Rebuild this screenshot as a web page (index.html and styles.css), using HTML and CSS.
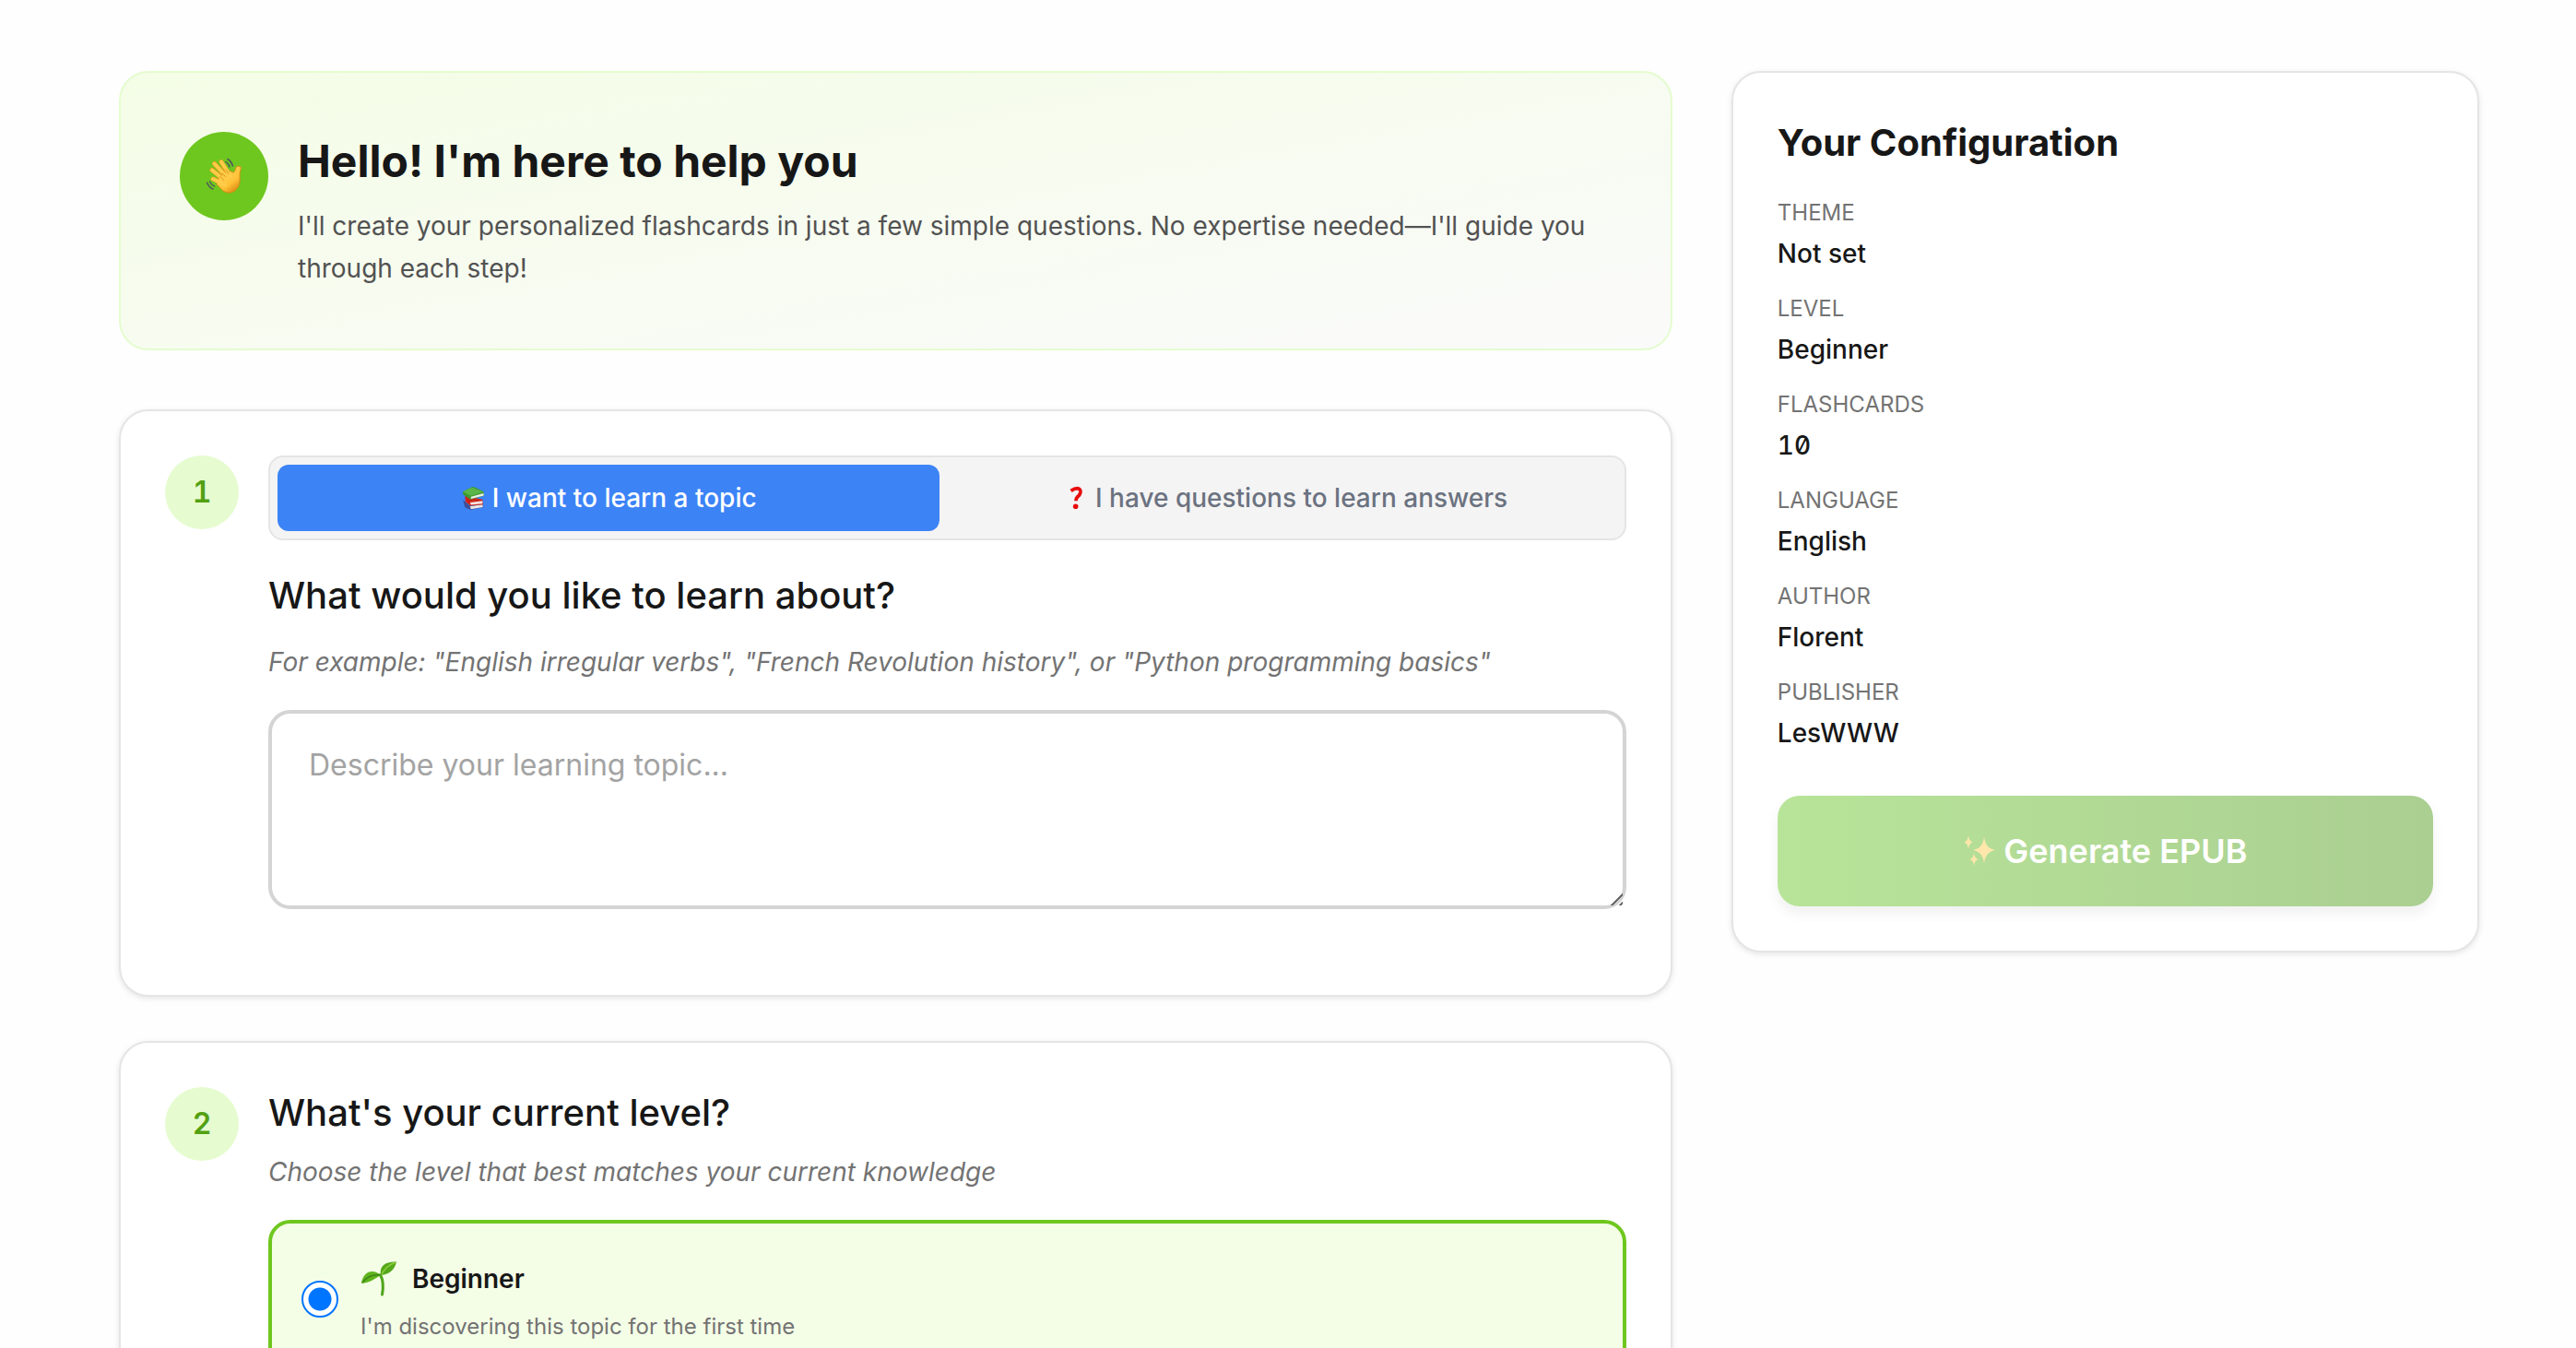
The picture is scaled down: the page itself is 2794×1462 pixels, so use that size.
FILE: index.html
```html
<!DOCTYPE html>
<html lang="en">
  <head>
    <meta charset="UTF-8" />
    <meta name="viewport" content="width=device-width, initial-scale=1.0" />
    <title>Flashcards Generator</title>
    <link rel="stylesheet" href="styles.css">
  </head>

  <body>
    <div class="layout">
      <main class="main">
        <!-- Welcome banner -->
        <section class="hero">
          <div class="hero-icon">
            <svg class="icon-wave" viewBox="0 0 40 40" aria-hidden="true">
              <defs>
                <linearGradient id="skin" x1="0" y1="0" x2="0.7" y2="1">
                  <stop offset="0" stop-color="#ffd45e" />
                  <stop offset="0.7" stop-color="#ffc238" />
                  <stop offset="1" stop-color="#dc8a14" />
                </linearGradient>
              </defs>
              <g stroke="#e39b1c" stroke-width="5" stroke-linecap="round">
                <path d="M22 20 L9.500 6.500" />
                <path d="M25 18 L17 4.500" />
                <path d="M19 23 L7 13.500" />
                <path d="M19 28 L8 23" />
              </g>
              <path d="M14 22 L25 14 L30 16 C31 16 32 14 32.500 12 C33 9.500 35 9 37 9.500 C39 10 38.500 12 37.500 14.500 C36.500 18 37.500 22 37 26 C36.500 33 31 38 25 38 C20 38 17 34 12 29 Z" fill="url(#skin)" stroke="#d98c14" stroke-width="1" />
              <g stroke="#ffcb48" stroke-width="4" stroke-linecap="round">
                <path d="M24 22 L9.500 6.500" />
                <path d="M27 20 L17 4.500" />
                <path d="M21 25 L7 13.500" />
                <path d="M21 30 L8 23" />
              </g>
              <path d="M18 17 L22 21 M15.500 20.500 L20 24.500 M22 13 L25 17.500" stroke="#e09a1e" stroke-width="1" stroke-linecap="round" />
              <g fill="none" stroke="#505a60" stroke-width="1.500" stroke-linecap="round">
                <path d="M24 1.500 Q28 4 29.500 9" />
                <path d="M22 4.500 Q25 6.500 26 10" />
                <path d="M1.500 27 Q3.500 32 8 34" />
                <path d="M4.500 26 Q6 29.500 9.500 31" />
              </g>
            </svg>
          </div>
          <div class="hero-text">
            <h1>Hello! I'm here to help you</h1>
            <p>I'll create your personalized flashcards in just a few simple questions. No expertise needed—I'll guide you through each step!</p>
          </div>
        </section>

        <!-- Step 1: topic -->
        <section class="card step">
          <div class="step-number">1</div>
          <div class="step-body">
            <div class="toggle">
              <button type="button" class="toggle-btn active">
                <svg class="icon-books" viewBox="0 0 24 24" aria-hidden="true">
                  <path d="M2 14 L4 21.500 L10 24 L22.500 21.500 L22 18 L9 20 Z" fill="#3d4f96" />
                  <path d="M9 20.500 L21.500 18.500 L22 21.300 L10 23.300 Z" fill="#e9e6e6" />
                  <path d="M4 10 L4.500 16 L9.500 19.800 L22 18.800 L21.500 13.500 Z" fill="#cf2418" />
                  <path d="M9 16.600 L21.500 15 L21.500 17.800 L10 19 Z" fill="#f3e3e0" />
                  <path d="M1.500 6 L10 1.500 Q12 0.500 14 1.300 L22.500 5.500 L23 10 L9.500 13.500 L2.500 9 Z" fill="#3c9a34" />
                  <path d="M2 5.800 L11 1.500 L22.500 6 L10 10 Z" fill="#5cb548" />
                  <path d="M10 10.800 L22.500 7.300 L22.800 9.600 L10 13 Z" fill="#eeefe8" />
                </svg>
                I want to learn a topic
              </button>
              <button type="button" class="toggle-btn">
                <svg class="icon-question" viewBox="0 0 24 24" aria-hidden="true">
                  <path d="M7 5 Q10.500 2.500 13.500 2.500 Q17 3 16.500 6.500 Q16 9 13.500 11 Q12 12.500 12 15" fill="none" stroke="#e80c0c" stroke-width="3.500" />
                  <circle cx="11.700" cy="20.500" r="2.600" fill="#e80c0c" />
                </svg>
                I have questions to learn answers
              </button>
            </div>
            <h2 class="topic-title"><label for="topic">What would you like to learn about?</label></h2>
            <p class="hint">For example: "English irregular verbs", "French Revolution history", or "Python programming basics"</p>
            <textarea id="topic" name="topic" rows="3" placeholder="Describe your learning topic..."></textarea>
          </div>
        </section>

        <!-- Step 2: level -->
        <section class="card step">
          <div class="step-number">2</div>
          <div class="step-body">
            <h2>What's your current level?</h2>
            <p class="hint">Choose the level that best matches your current knowledge</p>
            <label class="option" for="beginner">
              <input type="radio" name="level" id="beginner" value="beginner" checked />
              <span class="option-text">
                <span class="option-title">
                  <svg class="icon-seedling" viewBox="0 0 40 40" aria-hidden="true">
                    <path d="M21.500 15.500 Q26 24 23.500 37" fill="none" stroke="#4fa51c" stroke-width="3" stroke-linecap="round" />
                    <path d="M22 16 C20 6 27 1 39 1.500 C37 10 32 15 22 16 Z" fill="#56a81b" />
                    <path d="M23 15 C26 9 30 5 38 2" fill="none" stroke="#8ccc3c" stroke-width="1.500" />
                    <path d="M22 16 C14 9 3 11 1 25 C11 24 15 20 22 16 Z" fill="#5fb41f" />
                    <path d="M2 24 C7 18 13 15 21 16" fill="none" stroke="#3c8613" stroke-width="1.500" />
                  </svg>
                  Beginner
                </span>
                <span class="option-desc">I'm discovering this topic for the first time</span>
              </span>
            </label>
          </div>
        </section>
      </main>

      <!-- Summary of the choices -->
      <aside class="card config">
        <h2>Your Configuration</h2>
        <dl>
          <dt>Theme</dt>
          <dd>Not set</dd>
          <dt>Level</dt>
          <dd>Beginner</dd>
          <dt>Flashcards</dt>
          <dd class="number">10</dd>
          <dt>Language</dt>
          <dd>English</dd>
          <dt>Author</dt>
          <dd>Florent</dd>
          <dt>Publisher</dt>
          <dd>LesWWW</dd>
        </dl>
        <button type="button" class="generate" disabled>
          <svg class="icon-sparkles" viewBox="0 0 36 36" aria-hidden="true">
            <path d="M23 2 Q24 15 35 17 Q24 19 23 32 Q22 19 11 17 Q22 15 23 2 Z" fill="#ffd05a" />
            <path d="M6 1 Q6.500 7.500 11 8.500 Q6.500 9.500 6 16 Q5.500 9.500 1 8.500 Q5.500 7.500 6 1 Z" fill="#ffd05a" />
            <path d="M12 20 Q12.500 26 17 27 Q12.500 28 12 34 Q11.500 28 7 27 Q11.500 26 12 20 Z" fill="#ffd05a" />
          </svg>
          Generate EPUB
        </button>
      </aside>
    </div>
  </body>
</html>
```

FILE: styles.css
```css
* {
  margin: 0;
  padding: 0;
  box-sizing: border-box;
}

body {
  background-color: #fefefe;
  color: #171717;
  font-family: Inter, "Liberation Sans", sans-serif;
  font-size: 28px;
  line-height: 46px;
}

button,
textarea {
  font-family: inherit;
}

.layout {
  display: grid;
  grid-template-columns: 27fr 13fr;
  align-items: start;
  gap: 64px;
  padding: 77px 105px 48px 129px;
}

.main {
  display: flex;
  flex-direction: column;
  gap: 48px;
}

.hero {
  display: flex;
  gap: 32px;
  margin-bottom: 16px;
  padding: 64px;
  border: 2px solid #e5fccf;
  border-radius: 32px;
  background: linear-gradient(to bottom right, #f4fde6 0%, #fafafa 100%);
}

.hero-icon {
  display: flex;
  flex-shrink: 0;
  align-items: center;
  justify-content: center;
  width: 96px;
  height: 96px;
  border-radius: 50%;
  background-color: #6ec71e;
}

.icon-wave {
  width: 40px;
  height: 40px;
}

h1 {
  margin-bottom: 15px;
  font-size: 48px;
  font-weight: 700;
  line-height: 64px;
}

.hero p {
  color: #525252;
}

.card {
  padding: 48px;
  border: 2px solid #e5e5e5;
  border-radius: 32px;
  background-color: #fff;
  box-shadow: 0 2px 6px rgba(0, 0, 0, 0.1);
}

h2 {
  margin-bottom: 13px;
  font-size: 40px;
  font-weight: 500;
  line-height: 56px;
}

.step {
  display: flex;
  gap: 32px;
}

.step-number {
  flex-shrink: 0;
  width: 80px;
  height: 80px;
  border-radius: 50%;
  background-color: #e6fcd0;
  color: #52a012;
  font-size: 32px;
  font-weight: 600;
  line-height: 80px;
  text-align: center;
  font-feature-settings: "tnum", "zero";
}

.step-body {
  flex: 1;
}

.toggle {
  display: flex;
  gap: 16px;
  margin-bottom: 32px;
  padding: 8px;
  border: 2px solid #e5e5e5;
  border-radius: 16px;
  background-color: #f4f4f4;
}

.toggle-btn {
  display: flex;
  flex: 1;
  align-items: center;
  justify-content: center;
  gap: 8px;
  height: 72px;
  border: none;
  border-radius: 12px;
  background-color: transparent;
  color: #6b7280;
  font-size: 28px;
  font-weight: 500;
  cursor: pointer;
}

.toggle-btn.active {
  background-color: #3c83f6;
  color: #fff;
}

.icon-books,
.icon-question {
  width: 26px;
  height: 26px;
}

.topic-title {
  margin-bottom: 21px;
}

.hint {
  margin-bottom: 29px;
  color: #737373;
  font-style: italic;
}

textarea {
  display: block;
  width: 100%;
  margin-bottom: 45px;
  padding: 32px 40px;
  border: 4px solid #d4d4d4;
  border-radius: 24px;
  background-color: #fff;
  font-size: 32px;
  line-height: 48px;
  resize: vertical;
}

textarea::placeholder {
  color: #a3a3a3;
}

textarea::-webkit-scrollbar {
  width: 18px;
}

/* two diagonal grip lines */
textarea::-webkit-resizer {
  background: linear-gradient(
      135deg,
      transparent 12px,
      #6b6b6b 12px,
      #6b6b6b 14px,
      transparent 14px,
      transparent 18px,
      #6b6b6b 18px,
      #6b6b6b 20px,
      transparent 20px
    )
    0 0 / 16px 16px no-repeat;
}

.option {
  display: flex;
  align-items: center;
  gap: 24px;
  padding: 32px;
  border: 4px solid #6ec71e;
  border-radius: 24px;
  background-color: #f4fde6;
  cursor: pointer;
}

.option input {
  appearance: none;
  width: 40px;
  height: 40px;
  border: 2px solid #0075ff;
  border-radius: 50%;
  background: radial-gradient(circle, #0075ff 12px, #fff 13px);
}

.option-text,
.option-title {
  display: flex;
}

.option-text {
  flex-direction: column;
  gap: 4px;
}

.option-title {
  align-items: center;
  gap: 16px;
  font-weight: 600;
  line-height: 56px;
}

.icon-seedling {
  width: 40px;
  height: 40px;
}

.option-desc {
  color: #737373;
  font-size: 24px;
  line-height: 40px;
}

.config h2 {
  margin-bottom: 27px;
  font-weight: 700;
}

.config dl {
  margin-bottom: 45px;
}

.config dt {
  color: #737373;
  font-size: 24px;
  line-height: 42px;
  text-transform: uppercase;
}

.config dd {
  font-weight: 500;
}

.config dd + dt {
  margin-top: 16px;
}

.number {
  font-feature-settings: "tnum", "zero";
}

.generate {
  display: flex;
  align-items: center;
  justify-content: center;
  gap: 8px;
  width: 100%;
  height: 120px;
  border: none;
  border-radius: 24px;
  background: linear-gradient(90deg, #73cb35, #58a026);
  box-shadow: 0 8px 12px rgba(0, 0, 0, 0.1);
  color: #fff;
  font-size: 36px;
  font-weight: 600;
  opacity: 0.5;
}

.icon-sparkles {
  width: 36px;
  height: 36px;
}
```
